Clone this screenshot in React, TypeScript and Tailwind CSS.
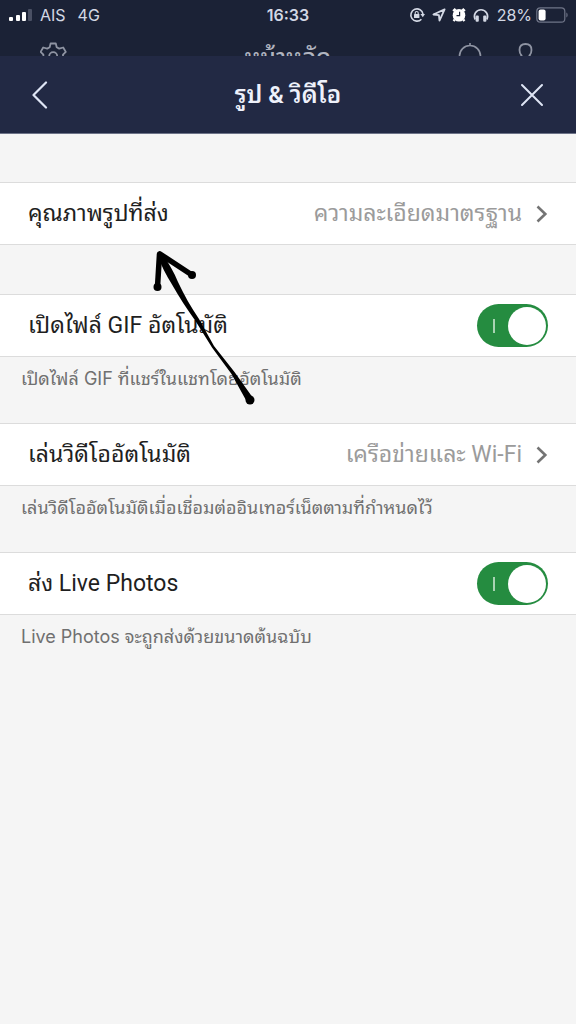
import { useState } from 'react'
import type { ReactNode } from 'react'

function StatusBar() {
  return (
    <div className="grid h-7 grid-cols-3 items-center px-2 pt-0.5 font-[Inter,sans-serif] text-base leading-6 text-[#d3d8e4]">
      <div className="flex items-center">
        <svg className="h-4 w-6" viewBox="0 0 24 16" aria-label="Signal">
          <rect x="1" y="10" width="4" height="4" rx="1" fill="#fff" />
          <rect x="8" y="8" width="4" height="6" rx="1" fill="#fff" />
          <rect x="14" y="5" width="4" height="9" rx="1" fill="#fff" />
          <rect x="20" y="2" width="4" height="12" rx="1" fill="#4a5064" />
        </svg>
        <span className="ml-2">AIS</span>
        <span className="ml-3">4G</span>
      </div>
      <div className="text-center font-semibold">16:33</div>
      <div className="flex items-center justify-end">
        <svg className="h-4 w-4" viewBox="0 0 16 16" fill="none" aria-label="Rotation lock">
          <path d="M12.4 12.2A6.1 6.1 0 1 1 14 7.2" stroke="currentColor" strokeWidth="1.6" />
          <path d="M11.4 7h4.6l-2.2 3.3z" fill="currentColor" />
          <rect x="5" y="7" width="5.4" height="4" rx=".6" fill="currentColor" />
          <path d="M6.2 7.3V6a1.5 1.5 0 0 1 3 0v1.3" stroke="currentColor" strokeWidth="1.1" />
        </svg>
        <svg className="ml-1.5 h-4 w-4" viewBox="0 0 16 16" fill="none" aria-label="Location">
          <path d="M13.6 2.4 2.4 7.5l5.5.7.6 5.500z" stroke="currentColor" strokeWidth="1.8" strokeLinejoin="round" />
        </svg>
        <svg className="ml-1 h-4 w-4" viewBox="0 0 16 16" aria-label="Alarm">
          <path d="m2.200 4.200 2.400-2.400M13.800 4.200l-2.400-2.400M3.800 12.700l-1.300 1.300M12.200 12.700l1.300 1.300" stroke="#fff" strokeWidth="2.4" />
          <circle cx="8" cy="8.2" r="6.300" fill="#fff" />
          <path d="M8.600 4.800v3.800H5.500" stroke="#1c2438" strokeWidth="1.2" fill="none" />
        </svg>
        <svg className="ml-1 h-4 w-5" viewBox="0 0 20 16" fill="none" aria-label="Headphones">
          <path d="M4.200 12.500A6.600 6.600 0 1 1 15.800 12.500" stroke="currentColor" strokeWidth="1.6" />
          <rect x="4.6" y="8.5" width="3.2" height="6.3" rx="1" fill="currentColor" />
          <rect x="12.2" y="8.5" width="3.2" height="6.3" rx="1" fill="currentColor" />
        </svg>
        <span className="ml-1.5">28%</span>
        <svg className="ml-1 h-4 w-8" viewBox="0 0 32 16" fill="none" aria-label="Battery">
          <rect x=".8" y=".8" width="28" height="14.4" rx="3.5" stroke="#6f7588" strokeWidth="1.2" />
          <rect x="2.6" y="2.6" width="7" height="10.8" rx="2" fill="#fff" />
          <path d="M30.400 5.500c1.600.8 1.600 4.200 0 5z" fill="#6f7588" />
        </svg>
      </div>
    </div>
  )
}

// Top of the screen that lies behind the sheet, cut off by the sheet's header
function ScreenBehind() {
  return (
    <div className="flex h-7 items-start justify-between overflow-hidden px-10 pt-3.5 text-[#8f94a3]" aria-hidden="true">
      <div className="flex w-20">
        <svg className="h-7 w-7 shrink-0" viewBox="0 0 28 28" fill="none" stroke="currentColor" strokeWidth="1.8" strokeLinejoin="round">
          <path d="M10.600 1.500h5.200l.9 3.700 2.500 1.400 4-1.100 2.600 4.400-2.800 2.800v2.900l2.800 2.800-2.600 4.400-4-1.100-2.500 1.400-.9 3.700h-5.200l-.9-3.700-2.500-1.400-4 1.100L.6 18.400l2.800-2.800v-2.900L.6 9.900l2.600-4.400 4 1.100 2.500-1.400z" />
          <circle cx="13.2" cy="14.2" r="4" />
        </svg>
      </div>
      <span className="text-2xl leading-8 font-medium text-[#b0b4c0]">หน้าหลัก</span>
      <div className="flex w-20 justify-end gap-8">
        <svg className="h-7 w-7 shrink-0" viewBox="0 0 28 28" fill="none" stroke="currentColor" strokeWidth="1.6">
          <path d="M3.500 24V14a10.500 10.500 0 0 1 21 0v10zM14 3.500V1" />
        </svg>
        <svg className="h-7 w-5 shrink-0" viewBox="0 0 20 28" fill="none" stroke="currentColor" strokeWidth="1.8">
          <path d="M5.500 13.500c-1.500-1.500-2-3.500-2-5.500C3.500 4 5.500 2 9.500 2s6 2 6 6c0 2-.5 4-2 5.500l5 8h-18z" />
        </svg>
      </div>
    </div>
  )
}

function Header() {
  return (
    <header className="flex h-[78px] items-center justify-between border-b border-[#6d7388] bg-[#222944] pr-8 pl-7 text-[#dfe5f5]">
      <button type="button" aria-label="Back" className="flex h-8 w-7 items-center justify-start">
        <svg className="ml-1 h-7 w-4" viewBox="0 0 16 28" fill="none" stroke="currentColor" strokeWidth="2.2" strokeLinecap="round" strokeLinejoin="round">
          <path d="M14 1.500 1.500 14 14 26.500" />
        </svg>
      </button>
      <h1 className="text-2xl leading-8 font-semibold text-[#eef1fb]">รูป &amp; วิดีโอ</h1>
      <button type="button" aria-label="Close" className="flex h-8 w-6 items-center justify-center">
        <svg className="h-6 w-6" viewBox="0 0 24 24" fill="none" stroke="currentColor" strokeWidth="2" strokeLinecap="round">
          <path d="m2 2 20 20M22 2 2 22" />
        </svg>
      </button>
    </header>
  )
}

const rowClass =
  'flex h-[63px] w-full items-center justify-between border-y border-[#dcdcdc] bg-white px-7 text-[23px] leading-8 text-[#1f1f1f]'

function LinkRow({ label, value }: { label: string; value: string }) {
  return (
    <button type="button" className={rowClass}>
      <span>{label}</span>
      <span className="flex items-center gap-3.5 text-[#9b9b9b]">
        {value}
        <svg className="h-5 w-3" viewBox="0 0 12 20" fill="none" stroke="#747474" strokeWidth="2.6">
          <path d="m1.500 2.500 7.800 7.500-7.800 7.500" />
        </svg>
      </span>
    </button>
  )
}

function SwitchRow({ label }: { label: string }) {
  const [on, setOn] = useState(true)

  return (
    <label className={rowClass}>
      <span>{label}</span>
      <input
        type="checkbox"
        role="switch"
        checked={on}
        onChange={(e) => setOn(e.target.checked)}
        className="peer sr-only"
      />
      <span className="flex h-[43px] w-[71px] items-center justify-between rounded-full bg-[#b5b5b5] pr-0.5 pl-4 peer-checked:bg-[#258c40]">
        <span className="h-3.5 w-0.5 bg-[#a9d3b3]" />
        <span className="h-[38px] w-[38px] rounded-full bg-white" />
      </span>
    </label>
  )
}

function Note({ children }: { children: ReactNode }) {
  return (
    <p className="h-[66px] px-[21px] pt-2 font-['Inter','Noto_Sans_Thai_Looped','Loma','Noto_Sans_Thai',sans-serif] text-lg leading-7 text-[#707070]">
      {children}
    </p>
  )
}

function Arrow() {
  return (
    <svg
      className="pointer-events-none absolute top-28 left-[150px] h-40 w-[110px]"
      viewBox="0 0 110 160"
      fill="none"
      aria-hidden="true"
    >
      <path d="M9.500 8 7.500 41M10 8l32 21" stroke="#000" strokeWidth="5.5" strokeLinecap="round" />
      <circle cx="7.5" cy="41" r="4" fill="#000" />
      <circle cx="42" cy="29" r="4" fill="#000" />
      <path d="M7.500 9C11 19 16 29 22 38.500 29 51 37 63 45.500 75L62 101.500 81.500 128 97 156l6-4L84.500 126 64 100 49 73C41 61 34 49 28 36 24 26 18 16 12 7z" fill="#000" />
      <circle cx="100" cy="154" r="4.5" fill="#000" />
    </svg>
  )
}

export default function App() {
  return (
    <div className="flex min-h-screen flex-col bg-[#f5f5f5] font-['Roboto','Noto_Sans_Thai_Looped','Loma','Noto_Sans_Thai',sans-serif]">
      <div className="bg-[#1b2236]">
        <StatusBar />
        <ScreenBehind />
      </div>
      <Header />
      <main className="relative flex-1 pt-12">
        <LinkRow label="คุณภาพรูปที่ส่ง" value="ความละเอียดมาตรฐาน" />
        <div className="h-[49px]" />
        <SwitchRow label="เปิดไฟล์ GIF อัตโนมัติ" />
        <Note>เปิดไฟล์ GIF ที่แชร์ในแชทโดยอัตโนมัติ</Note>
        <LinkRow label="เล่นวิดีโออัตโนมัติ" value="เครือข่ายและ Wi-Fi" />
        <Note>เล่นวิดีโออัตโนมัติเมื่อเชื่อมต่ออินเทอร์เน็ตตามที่กำหนดไว้</Note>
        <SwitchRow label="ส่ง Live Photos" />
        <Note>Live Photos จะถูกส่งด้วยขนาดต้นฉบับ</Note>
        <Arrow />
      </main>
    </div>
  )
}
